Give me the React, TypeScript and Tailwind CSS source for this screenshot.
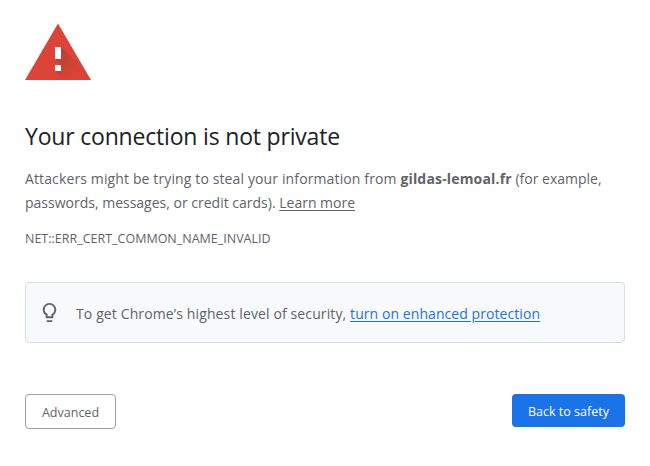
function WarningIcon() {
  return (
    <svg className="block h-[58px] w-[66px]" viewBox="0 0 66 58" fill="none" aria-hidden="true">
      <defs>
        <linearGradient id="shade" x1="32" y1="30" x2="50" y2="48" gradientUnits="userSpaceOnUse">
          <stop stopColor="#3e2723" stopOpacity="0.22" />
          <stop offset="1" stopColor="#3e2723" stopOpacity="0.02" />
        </linearGradient>
      </defs>
      <path d="M33 .5 66 57H0z" fill="#db4437" />
      <path d="m36 24 20 20 7 13H39l-9-9 6-6-6-6z" fill="url(#shade)" />
      <path d="M30 24h6v12h-6zM30 42h6v6h-6z" fill="#fff" />
    </svg>
  );
}

function BulbIcon() {
  return (
    <svg className="block size-[23px] shrink-0" viewBox="0 0 24 24" fill="#5f6368" aria-hidden="true">
      <path d="M9 21c0 .55.45 1 1 1h4c.55 0 1-.45 1-1v-1H9v1zm3-19C8.14 2 5 5.14 5 9c0 2.38 1.19 4.47 3 5.74V17c0 .55.45 1 1 1h6c.55 0 1-.45 1-1v-2.26c1.81-1.27 3-3.36 3-5.74 0-3.86-3.14-7-7-7zm2.85 11.1-.85.6V16h-4v-2.3l-.85-.6A4.997 4.997 0 0 1 7 9c0-2.76 2.24-5 5-5s5 2.24 5 5c0 1.63-.8 3.16-2.15 4.1z" />
    </svg>
  );
}

export default function App() {
  return (
    <main className="h-[466px] w-[650px] bg-white px-[25px] pt-[23px] font-['Open_Sans','Noto_Sans',sans-serif] text-[14px] leading-6 text-[#5f6368]">
      <WarningIcon />
      <h1 className="mt-10 whitespace-nowrap text-[23px] leading-[30px] tracking-[-0.19px] text-[#202124]">
        Your connection is not private
      </h1>
      <p className="mt-4 whitespace-nowrap">
        <span className="tracking-[0.125px]">Attackers might be trying to steal your information from </span>
        <strong className="font-bold tracking-[0.17px]">gildas-lemoal.fr</strong> (for example,
        <br />
        passwords, messages, or credit cards).{' '}
        <a className="underline underline-offset-2" href="#">Learn more</a>
      </p>
      <p className="mt-3 text-[12.5px]">NET::ERR_CERT_COMMON_NAME_INVALID</p>
      <section className="mt-[31px] flex h-[61px] items-center rounded border border-[#dadce0] bg-[#f8f9fa] pl-3">
        <BulbIcon />
        <p className="ml-[15px] mt-0.5 whitespace-nowrap tracking-[0.12px]">
          To get Chrome’s highest level of security,{' '}
          <a className="tracking-[0.07px] text-[#1a73e8] underline underline-offset-2" href="#">
            turn on enhanced protection
          </a>
        </p>
      </section>
      <div className="mt-[51px] flex items-start justify-between text-[12.5px]">
        <button className="h-[35px] w-[91px] rounded border border-[#9aa0a6] bg-white pt-[3px]">Advanced</button>
        <button className="h-[33px] w-[113px] rounded bg-[#1a73e8] pt-[3px] text-white">Back to safety</button>
      </div>
    </main>
  );
}
